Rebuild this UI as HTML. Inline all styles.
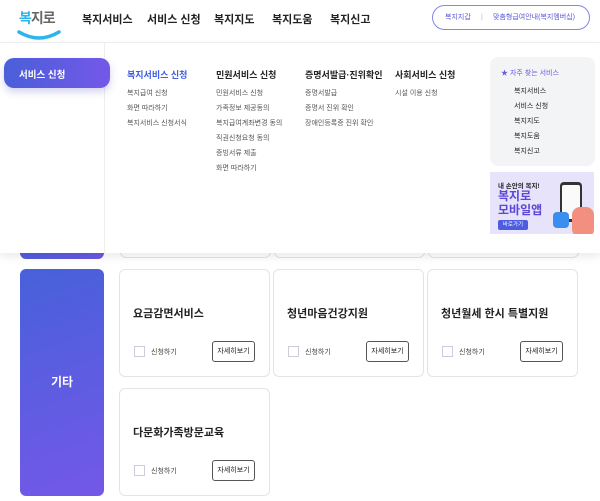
<!DOCTYPE html>
<html><head><meta charset="utf-8"><style>
*{margin:0;padding:0;box-sizing:border-box}
body{width:600px;height:501px;overflow:hidden;background:#fff;font-family:"Liberation Sans","Noto Sans CJK KR",sans-serif;color:#222;position:relative}
.a{position:absolute}
.nav{font-size:11px;font-weight:bold;top:11px;color:#222}
.h{font-size:9px;font-weight:bold;top:68px;color:#222}
.it{font-size:7px;color:#555;line-height:15px}
.card{position:absolute;width:151px;height:108px;border:1px solid #e4e4e8;border-radius:6px;background:#fff}
.card .t{position:absolute;left:13px;top:35px;font-size:11px;font-weight:bold;color:#222}
.card .cb{position:absolute;left:14px;top:76px;width:11px;height:11px;border:1px solid #ccd}
.card .l{position:absolute;left:31px;top:77px;font-size:7px;color:#444}
.card .b{position:absolute;left:92px;top:71px;width:43px;height:21px;border:1px solid #555;border-radius:3px;font-size:7px;text-align:center;line-height:19px;color:#222}
</style></head><body>
<!-- header -->
<div class="a" style="left:19px;top:8px;font-size:14px;font-weight:bold;letter-spacing:-1px"><span style="color:#2bb5ea">복</span><span style="color:#666">지로</span></div>
<svg class="a" style="left:16px;top:28px" width="46" height="16"><path d="M3 4 Q23 16 43 4" stroke="#2bb5ea" stroke-width="3.5" fill="none" stroke-linecap="round"/></svg>
<div class="a nav" style="left:82px">복지서비스</div>
<div class="a nav" style="left:147px">서비스 신청</div>
<div class="a nav" style="left:214px">복지지도</div>
<div class="a nav" style="left:272px">복지도움</div>
<div class="a nav" style="left:330px">복지신고</div>
<div class="a" style="left:432px;top:5px;width:158px;height:25px;border:1px solid #8088ea;border-radius:13px;font-size:7px;color:#5a55d6;line-height:23px">
<span style="position:absolute;left:12px">복지지갑</span><span style="position:absolute;left:48px;color:#bbb">|</span><span style="position:absolute;left:60px">맞춤형급여안내(복지멤버십)</span></div>
<div class="a" style="left:0;top:42px;width:600px;height:1px;background:#eee"></div>
<!-- behind content -->
<div class="a" style="left:20px;top:230px;width:84px;height:29px;background:linear-gradient(135deg,#4a5fd9,#6b58e3);border-radius:6px"></div>
<div class="card" style="left:120px;top:200px;height:58px"></div>
<div class="card" style="left:274px;top:200px;height:58px"></div>
<div class="card" style="left:428px;top:200px;height:58px"></div>
<!-- dropdown -->
<div class="a" style="left:0;top:43px;width:600px;height:210px;background:#fff;box-shadow:0 4px 8px rgba(0,0,0,.08)"></div>
<div class="a" style="left:104px;top:43px;width:1px;height:210px;background:#eee"></div>
<div class="a" style="left:4px;top:58px;width:106px;height:30px;border-radius:10px;background:linear-gradient(90deg,#4a5fd9,#7458e8);box-shadow:0 4px 8px rgba(80,80,200,.25);color:#fff;font-size:9.5px;font-weight:bold;padding:9px 0 0 15px">서비스 신청</div>
<div class="a h" style="left:127px;color:#3f5ee0">복지서비스 신청</div>
<div class="a h" style="left:216px">민원서비스 신청</div>
<div class="a h" style="left:305px">증명서발급·진위확인</div>
<div class="a h" style="left:395px">사회서비스 신청</div>
<div class="a it" style="left:127px;top:86px">복지급여 신청<br>화면 따라하기<br>복지서비스 신청서식</div>
<div class="a it" style="left:216px;top:86px">민원서비스 신청<br>가족정보 제공동의<br>복지급여계좌변경 동의<br>직권신청요청 동의<br>증빙서류 제출<br>화면 따라하기</div>
<div class="a it" style="left:305px;top:86px">증명서발급<br>증명서 진위 확인<br>장애인등록증 진위 확인</div>
<div class="a it" style="left:395px;top:86px">시설 이용 신청</div>
<div class="a" style="left:490px;top:57px;width:105px;height:109px;background:#f2f4f6;border-radius:8px"></div>
<div class="a" style="left:501px;top:68px;font-size:7px;color:#6a5ce0;font-weight:bold">★ <span style="font-weight:normal">자주 찾는 서비스</span></div>
<div class="a" style="left:514px;top:84px;font-size:7px;line-height:15px;color:#222">복지서비스<br>서비스 신청<br>복지지도<br>복지도움<br>복지신고</div>
<div class="a" style="left:490px;top:172px;width:104px;height:62px;background:#e6e3fb;overflow:hidden">
<div class="a" style="left:8px;top:8px;font-size:6.5px;font-weight:bold;color:#222">내 손안의 복지!</div>
<div class="a" style="left:8px;top:17px;font-size:12px;font-weight:bold;color:#5b46d6;line-height:14px">복지로<br>모바일앱</div>
<div class="a" style="left:8px;top:48px;width:30px;height:10px;background:#4e5de0;border-radius:2px;font-size:5.5px;color:#fff;text-align:center;line-height:10px">바로가기</div>
<div class="a" style="left:70px;top:10px;width:22px;height:40px;background:#333;border-radius:4px"></div>
<div class="a" style="left:72px;top:13px;width:18px;height:34px;background:#fafafa;border-radius:2px"></div>
<div class="a" style="left:82px;top:35px;width:22px;height:30px;background:#f28f7e;border-radius:8px"></div>
<div class="a" style="left:63px;top:40px;width:16px;height:16px;background:#3a8ef0;border-radius:4px"></div>
</div>
<!-- main -->
<div class="a" style="left:20px;top:269px;width:84px;height:227px;background:linear-gradient(160deg,#4761da,#7458e8);border-radius:6px;color:#fff;font-size:12px;font-weight:bold;text-align:center;line-height:227px">기타</div>
<div class="card" style="left:119px;top:269px"><div class="t">요금감면서비스</div><div class="cb"></div><div class="l">신청하기</div><div class="b">자세히보기</div></div>
<div class="card" style="left:273px;top:269px"><div class="t">청년마음건강지원</div><div class="cb"></div><div class="l">신청하기</div><div class="b">자세히보기</div></div>
<div class="card" style="left:427px;top:269px"><div class="t">청년월세 한시 특별지원</div><div class="cb"></div><div class="l">신청하기</div><div class="b">자세히보기</div></div>
<div class="card" style="left:119px;top:388px"><div class="t">다문화가족방문교육</div><div class="cb"></div><div class="l">신청하기</div><div class="b">자세히보기</div></div>
</body></html>
